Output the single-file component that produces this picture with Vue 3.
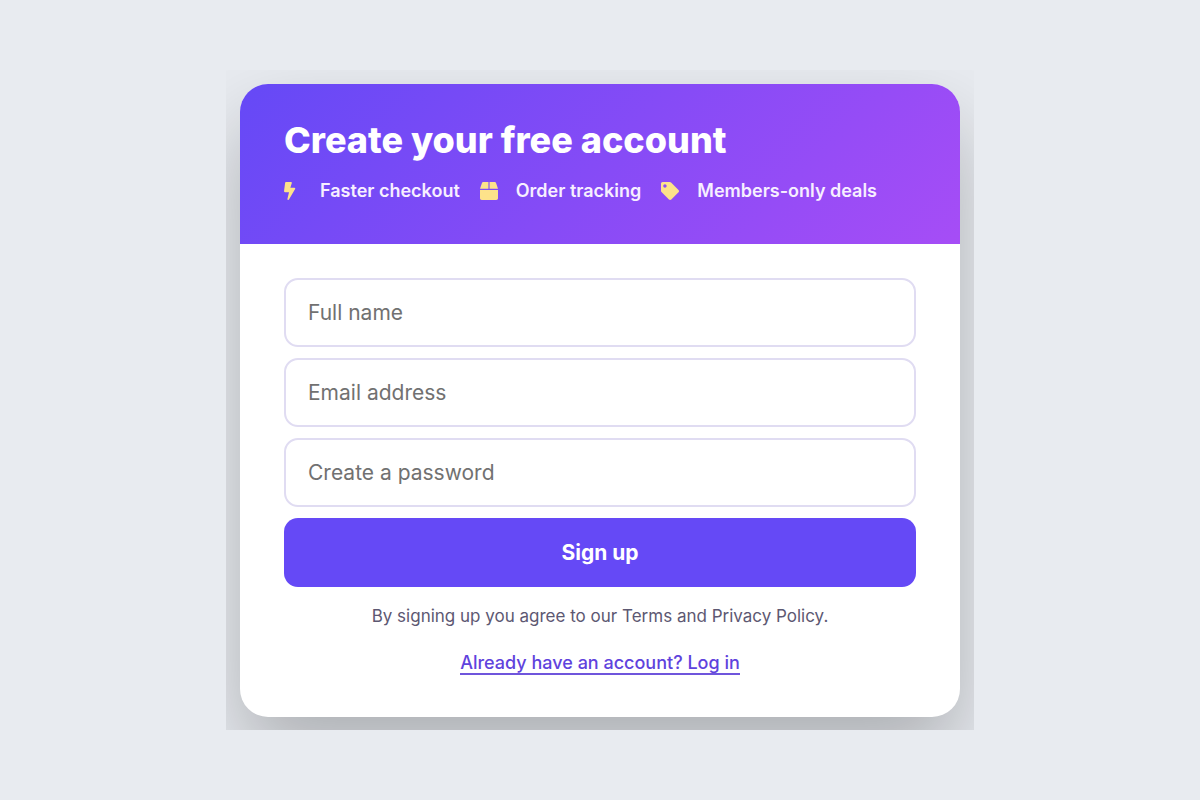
<script setup>
import { ref } from 'vue'

const benefits = [
  {
    label: 'Faster checkout',
    viewBox: '0 0 320 512',
    path: 'M296 160H180.6l42.6-129.8C227.2 15 215.7 0 200 0H56C44 0 33.8 8.9 32.2 20.8l-32 240C-1.7 275.2 9.5 288 24 288h118.7L96.6 482.5c-3.6 15.2 8 29.5 23.3 29.5 8.4 0 16.4-4.4 20.8-12l176-304c9.3-15.9-2.2-36-20.7-36z'
  },
  {
    label: 'Order tracking',
    viewBox: '0 0 512 512',
    path: 'M509.5 184.6L458.9 32.8C452.4 13.2 434.1 0 413.4 0H272v192h238.7c-.4-2.5-.4-5-1.2-7.4zM240 0H98.6c-20.7 0-39 13.2-45.5 32.8L2.5 184.6c-.8 2.4-.8 4.9-1.2 7.4H240V0zM0 224v240c0 26.5 21.5 48 48 48h416c26.5 0 48-21.5 48-48V224H0z'
  },
  {
    label: 'Members-only deals',
    viewBox: '0 0 512 512',
    path: 'M0 252.118V48C0 21.49 21.49 0 48 0h204.118a48 48 0 0 1 33.941 14.059l211.882 211.882c18.745 18.745 18.745 49.137 0 67.882L293.823 497.941c-18.745 18.745-49.137 18.745-67.882 0L14.059 286.059A48 48 0 0 1 0 252.118zM112 64c-26.51 0-48 21.49-48 48s21.49 48 48 48 48-21.49 48-48-21.49-48-48-48z'
  }
]

const fields = [
  { id: 'name', type: 'text', label: 'Full name', autocomplete: 'name' },
  { id: 'email', type: 'email', label: 'Email address', autocomplete: 'email' },
  { id: 'password', type: 'password', label: 'Create a password', autocomplete: 'new-password' }
]

const form = ref({ name: '', email: '', password: '' })
</script>

<template>
  <main class="page">
    <div class="frame">
      <section class="card">
        <header class="hero">
          <h1 class="title">Create your free account</h1>
          <ul class="benefits">
            <li v-for="b in benefits" :key="b.label" class="benefit">
              <svg class="icon" :viewBox="b.viewBox" preserveAspectRatio="xMinYMid meet" aria-hidden="true">
                <path :d="b.path" />
              </svg>
              <span>{{ b.label }}</span>
            </li>
          </ul>
        </header>
        <form class="form" @submit.prevent>
          <input
            v-for="f in fields"
            :id="f.id"
            :key="f.id"
            v-model="form[f.id]"
            class="field"
            :type="f.type"
            :placeholder="f.label"
            :aria-label="f.label"
            :autocomplete="f.autocomplete"
          />
          <button class="submit" type="submit">Sign up</button>
          <p class="terms">By signing up you agree to our Terms and Privacy Policy.</p>
          <a class="login" href="#login">Already have an account? Log in</a>
        </form>
      </section>
    </div>
  </main>
</template>

<style>
body {
  margin: 0;
  background: #e8ebf0;
}
</style>

<style scoped>
.page {
  min-height: 100vh;
  display: flex;
  align-items: center;
  justify-content: center;
  font-family: Inter, "Liberation Sans", sans-serif;
}

.frame {
  box-sizing: border-box;
  width: 100%;
  max-width: 748px;
  padding: 14px 14px 13px;
  overflow: hidden;
}

.card {
  border-radius: 28px;
  background: #fff;
  box-shadow: 0 40px 80px rgba(0, 0, 0, 0.25);
}

.hero {
  padding: 32px 44px 39px;
  border-radius: 28px 28px 0 0;
  background: linear-gradient(135deg, #6549f6, #a64df6);
  color: #fff;
}

.title {
  margin: 0;
  font-size: 36px;
  line-height: 48px;
  font-weight: 800;
}

.benefits {
  display: flex;
  flex-wrap: wrap;
  gap: 8px 20px;
  margin: 13px 0 0;
  padding: 0;
  list-style: none;
}

.benefit {
  display: flex;
  align-items: center;
  gap: 18px;
  font-size: 18px;
  line-height: 28px;
  font-weight: 600;
  color: #f7efff;
}

.icon {
  width: 18px;
  height: 18px;
  flex: none;
  fill: #fde28a;
}

.form {
  display: flex;
  flex-direction: column;
  gap: 11px;
  padding: 34px 44px 42px;
}

.field {
  box-sizing: border-box;
  width: 100%;
  height: 69px;
  padding: 0 22px;
  border: 2px solid #e0dcf2;
  border-radius: 14px;
  background: #fff;
  color: #222;
  font: 400 21px/28px Inter, "Liberation Sans", sans-serif;
}

.field::placeholder {
  color: #717171;
  opacity: 1;
}

.submit {
  height: 69px;
  border: 0;
  border-radius: 14px;
  background: #6549f6;
  color: #fff;
  font: 700 21px/28px Inter, "Liberation Sans", sans-serif;
  cursor: pointer;
}

.terms {
  margin: 6px 0 0;
  text-align: center;
  font-size: 17px;
  line-height: 24px;
  color: #5d5872;
}

.login {
  align-self: center;
  margin-top: 14px;
  border-bottom: 2px solid #6f55dc;
  font-size: 18px;
  line-height: 20px;
  font-weight: 500;
  color: #5f43dd;
  text-decoration: none;
}
</style>
